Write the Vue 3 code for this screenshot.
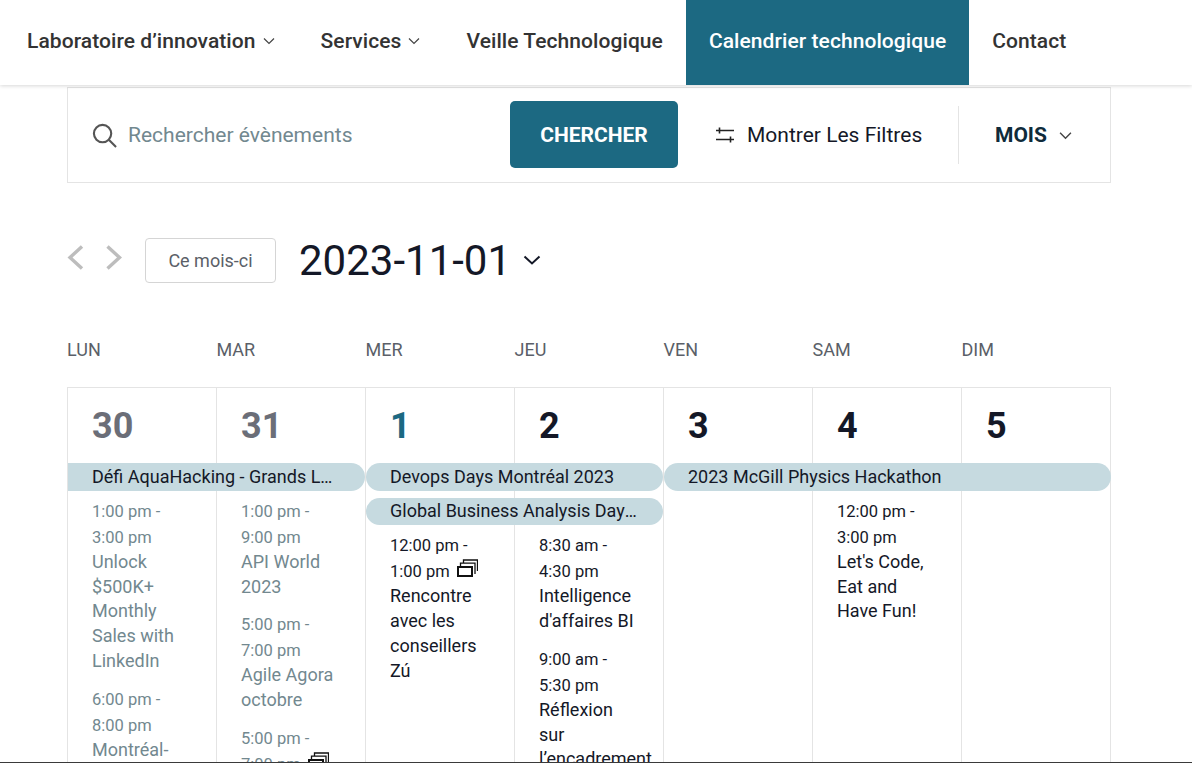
<script setup>
const days = ['LUN', 'MAR', 'MER', 'JEU', 'VEN', 'SAM', 'DIM']
const nums = [
  { n: 30, cls: 'past' },
  { n: 31, cls: 'past' },
  { n: 1, cls: 'today' },
  { n: 2, cls: '' },
  { n: 3, cls: '' },
  { n: 4, cls: '' },
  { n: 5, cls: '' }
]
const bars = [
  { t: 'Défi AquaHacking - Grands Lacs', c: 'bar-a' },
  { t: 'Devops Days Montréal 2023', c: 'bar-b' },
  { t: '2023 McGill Physics Hackathon', c: 'bar-c' },
  { t: 'Global Business Analysis Days Montréal 2023', c: 'bar-d' }
]
const cols = [
  { c: 'ev-1 past', items: [
    { a: '1:00 pm -', b: '3:00 pm', t: 'Unlock $500K+ Monthly Sales with LinkedIn' },
    { a: '6:00 pm -', b: '8:00 pm', t: 'Montréal-Python' }
  ] },
  { c: 'ev-2 past', items: [
    { a: '1:00 pm -', b: '9:00 pm', t: 'API World 2023' },
    { a: '5:00 pm -', b: '7:00 pm', t: 'Agile Agora octobre' },
    { a: '5:00 pm -', b: '7:00 pm', t: 'Rencontre', icon: true }
  ] },
  { c: 'ev-3', items: [
    { a: '12:00 pm -', b: '1:00 pm', t: 'Rencontre avec les conseillers Zú', icon: true }
  ] },
  { c: 'ev-4', items: [
    { a: '8:30 am -', b: '4:30 pm', t: "Intelligence d'affaires BI" },
    { a: '9:00 am -', b: '5:30 pm', t: 'Réflexion sur l’encadrement' }
  ] },
  { c: 'ev-6', items: [
    { a: '12:00 pm -', b: '3:00 pm', t: "Let's Code, Eat and Have Fun!" }
  ] }
]
</script>

<template>
  <div class="page">
    <header class="nav">
      <a class="nav-item">Laboratoire d’innovation
        <svg class="caret" viewBox="0 0 12 8"><path d="M1 1.5l5 5 5-5" /></svg>
      </a>
      <a class="nav-item">Services
        <svg class="caret" viewBox="0 0 12 8"><path d="M1 1.5l5 5 5-5" /></svg>
      </a>
      <a class="nav-item">Veille Technologique</a>
      <a class="nav-item active">Calendrier technologique</a>
      <a class="nav-item">Contact</a>
    </header>

    <main class="content">
      <section class="search">
        <div class="search-field">
          <svg class="search-icon" viewBox="0 0 26 26">
            <circle cx="11" cy="11" r="9" />
            <path d="M17.5 17.5l7.5 7.5" />
          </svg>
          <span class="placeholder">Rechercher évènements</span>
        </div>
        <button class="submit">CHERCHER</button>
        <div class="filters">
          <svg class="filter-icon" viewBox="0 0 18 16">
            <path d="M0 3.5h18M3.5 0.5v6M0 12.5h18M14.5 9.5v6" />
          </svg>
          <span>Montrer Les Filtres</span>
        </div>
        <div class="view">
          <strong>MOIS</strong>
          <svg class="view-caret" viewBox="0 0 12 8"><path d="M1 1.5l5 5 5-5" /></svg>
        </div>
      </section>

      <section class="toolbar">
        <svg class="arrow" viewBox="0 0 17 25"><path d="M15 1.5L3 12.5l12 11" /></svg>
        <svg class="arrow" viewBox="0 0 17 25"><path d="M1.5 1.5L13.5 12.5l-12 11" /></svg>
        <button class="this-month">Ce mois-ci</button>
        <h1 class="date">2023-11-01</h1>
        <svg class="date-caret" viewBox="0 0 18 10"><path d="M1.5 1.5L9 8.5l7.5-7" /></svg>
      </section>

      <div class="weekdays">
        <span v-for="d in days" :key="d">{{ d }}</span>
      </div>

      <section class="grid">
        <div v-for="(d, i) in days" :key="d" class="cell" :style="{ gridColumn: i + 1 }"></div>
        <div
          v-for="(x, i) in nums"
          :key="x.n"
          class="num"
          :class="x.cls"
          :style="{ gridColumn: i + 1 }"
        >{{ x.n }}</div>
        <div v-for="b in bars" :key="b.t" class="bar" :class="b.c">
          <span>{{ b.t }}</span>
        </div>
        <div v-for="col in cols" :key="col.c" class="events" :class="col.c">
          <article v-for="(e, j) in col.items" :key="j" class="event">
            <div class="time">{{ e.a }}<br />{{ e.b }}
              <svg v-if="e.icon" class="recur" viewBox="0 0 21 18">
                <path class="recur-front" d="M1 8h14v9H1z" />
                <path d="M3.5 7V4.2H18V15M6.5 3.5V1H20.5V12" />
              </svg>
            </div>
            <div class="title">{{ e.t }}</div>
          </article>
        </div>
      </section>
    </main>
  </div>
</template>

<style>
html, body { margin: 0; padding: 0; background: #fff; }
</style>

<style scoped>
.page {
  width: 1192px;
  height: 763px;
  overflow: hidden;
  display: flex;
  flex-direction: column;
  box-sizing: border-box;
  border-bottom: 1px solid #3a3a3a;
  font-family: Roboto, "Liberation Sans", sans-serif;
  color: #141827;
  background: #fff;
}
.nav {
  flex: none;
  height: 85px;
  display: flex;
  align-items: stretch;
  padding-left: 4px;
  background: #fff;
  box-shadow: 0 1px 4px rgba(0, 0, 0, 0.16);
  position: relative;
  z-index: 1;
}
.nav-item {
  display: flex;
  align-items: center;
  padding: 0 23px 3px;
  font-size: 21px;
  font-weight: 500;
  letter-spacing: 0.07px;
  color: #333;
  white-space: nowrap;
}
.nav-item.active {
  background: #1c6982;
  color: #fff;
}
.caret {
  width: 12px;
  height: 8px;
  margin-left: 7px;
  fill: none;
  stroke: #444;
  stroke-width: 1.2;
}
.content {
  flex: 1;
  min-height: 0;
  padding: 2px 81px 0 67px;
}
.search {
  height: 96px;
  box-sizing: border-box;
  border: 1px solid #e4e4e4;
  display: flex;
  align-items: center;
}
.search-field {
  width: 442px;
  display: flex;
  align-items: center;
  padding-left: 24px;
  box-sizing: border-box;
}
.search-icon {
  width: 25px;
  height: 25px;
  fill: none;
  stroke: #555;
  stroke-width: 2.2;
  margin-right: 11px;
}
.placeholder {
  font-size: 21px;
  color: #72888f;
}
.submit {
  width: 168px;
  height: 67px;
  margin-bottom: 1px;
  border: 0;
  border-radius: 5px;
  background: #1c6982;
  color: #fff;
  font: 700 21px Roboto, sans-serif;
}
.filters {
  display: flex;
  align-items: center;
  width: 281px;
  height: 58px;
  box-sizing: border-box;
  padding-left: 38px;
  border-right: 1px solid #e4e4e4;
  font-size: 21px;
  color: #141827;
}
.filter-icon {
  width: 18px;
  height: 16px;
  margin-right: 13px;
  fill: none;
  stroke: #222;
  stroke-width: 1.6;
}
.view {
  display: flex;
  align-items: center;
  padding-left: 36px;
  font-size: 21px;
  color: #0f2b3a;
}
.view strong { font-weight: 700; }
.view-caret {
  width: 13px;
  height: 9px;
  margin-left: 12px;
  fill: none;
  stroke: #444;
  stroke-width: 1.3;
}
.toolbar {
  display: flex;
  align-items: center;
  height: 78px;
  margin-top: 38px;
}
.arrow {
  width: 17px;
  height: 25px;
  margin-right: 22px;
  margin-bottom: 5px;
  fill: none;
  stroke: #bdbdbd;
  stroke-width: 3.4;
}
.arrow + .arrow { margin-right: 22px; }
.this-month {
  width: 131px;
  height: 45px;
  background: #fff;
  border: 1px solid #d5d5d5;
  border-radius: 4px;
  font: 400 18px Roboto, sans-serif;
  color: #5b5f68;
}
.date {
  margin: 0 0 0 23px;
  font-size: 42px;
  font-weight: 400;
  color: #141827;
}
.date-caret {
  width: 18px;
  height: 10px;
  margin-left: 12px;
  fill: none;
  stroke: #141827;
  stroke-width: 2;
}
.weekdays {
  display: grid;
  grid-template-columns: repeat(7, 149px);
  margin-top: 40px;
  height: 21px;
  font-size: 18px;
  line-height: 21px;
  color: #5b5f68;
}
.weekdays span + span { margin-left: 0.5px; }
.grid {
  display: grid;
  grid-template-columns: repeat(6, 149px) 150px;
  grid-template-rows: 75px 35px 35px auto;
  margin-top: 27px;
  width: 1044px;
  box-sizing: border-box;
  border-top: 1px solid #e4e4e4;
}
.cell {
  grid-row: 1 / -1;
  border-left: 1px solid #e4e4e4;
  min-height: 400px;
}
.cell:nth-child(7) { border-right: 1px solid #e4e4e4; }
.num {
  grid-row: 1;
  padding: 18px 0 0 25px;
  font-size: 36px;
  font-weight: 700;
  line-height: 40px;
  color: #141827;
}
.num.past { color: #6b6e78; }
.num.today { color: #1c6982; }
.bar {
  height: 28px;
  line-height: 28px;
  background: #c6dae0;
  border-radius: 14px;
  padding: 0 24px;
  box-sizing: border-box;
  font-size: 18px;
  color: #141827;
  margin-left: 1px;
  min-width: 0;
  overflow: hidden;
  white-space: nowrap;
  text-overflow: ellipsis;
}
.bar-a {
  grid-row: 2;
  grid-column: 1 / span 2;
  border-radius: 0 14px 14px 0;
}
.bar-b { grid-row: 2; grid-column: 3 / span 2; }
.bar-c { grid-row: 2; grid-column: 5 / span 3; }
.bar-d { grid-row: 3; grid-column: 3 / span 2; height: 27px; line-height: 26px; }
.events {
  padding: 0 24px 0 25px;
  min-width: 0;
}
.ev-1 { grid-column: 1; grid-row: 3 / 5; padding-top: 1px; }
.ev-2 { grid-column: 2; grid-row: 3 / 5; padding-top: 1px; }
.ev-6 { grid-column: 6; grid-row: 3 / 5; padding-top: 1px; }
.ev-3 { grid-column: 3; grid-row: 4; padding-top: 0.4px; }
.ev-4 { grid-column: 4; grid-row: 4; padding-top: 0.4px; }
.event { margin-bottom: 13px; }
.time {
  font-size: 16.5px;
  line-height: 26px;
  color: #141827;
}
.title {
  font-size: 18px;
  line-height: 24.7px;
  margin-top: -1px;
  color: #141827;
}
.past .time, .past .title { color: #72888f; }
.recur {
  width: 21px;
  height: 18px;
  margin: -6px 0 -6px 3px;
  fill: none;
  stroke: #111;
  stroke-width: 1.3;
  vertical-align: 6px;
}
.recur-front { stroke-width: 2; }
</style>
